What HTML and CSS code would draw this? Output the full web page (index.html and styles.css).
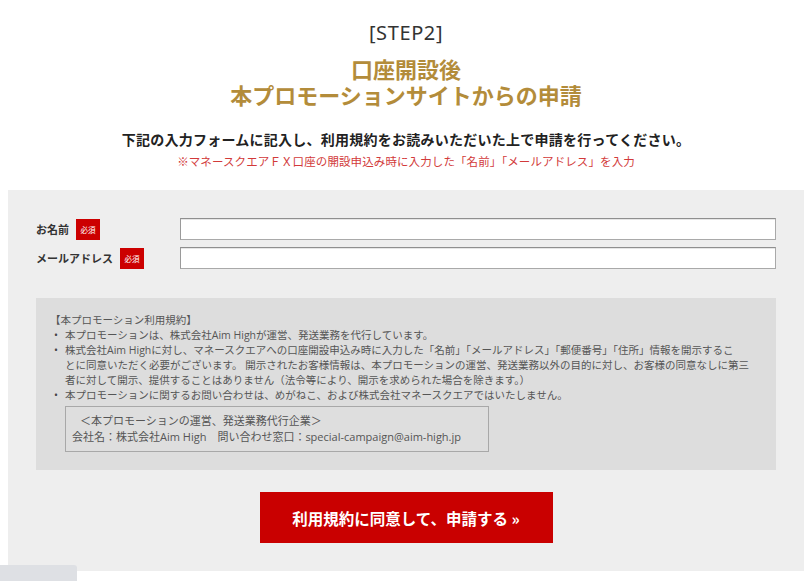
FILE: index.html
```html
<!DOCTYPE html>
<html lang="ja">
<head>
<meta charset="utf-8">
<title>STEP2</title>
<link rel="stylesheet" href="styles.css">
</head>
<body>
<header class="intro">
  <p class="step">[STEP2]</p>
  <h1 class="title">口座開設後<br>本プロモーションサイトからの申請</h1>
  <p class="lead">下記の入力フォームに記入し、利用規約をお読みいただいた上で申請を行ってください。</p>
  <p class="note">※マネースクエアＦＸ口座の開設申込み時に入力した「名前」「メールアドレス」を入力</p>
</header>

<section class="panel">
  <form class="form">
    <div class="row">
      <label class="label" for="name">お名前<span class="req">必須</span></label>
      <input class="field" id="name" type="text">
    </div>
    <div class="row">
      <label class="label" for="mail">メールアドレス<span class="req">必須</span></label>
      <input class="field" id="mail" type="text">
    </div>
  </form>

  <div class="terms">
    <p class="terms-title">【本プロモーション利用規約】</p>
    <ul class="terms-list">
      <li>本プロモーションは、株式会社Aim Highが運営、発送業務を代行しています。</li>
      <li>株式会社Aim Highに対し、マネースクエアへの口座開設申込み時に入力した「名前」「メールアドレス」「郵便番号」「住所」情報を開示するこ<br>とに同意いただく必要がございます。 開示されたお客様情報は、本プロモーションの運営、発送業務以外の目的に対し、お客様の同意なしに第三<br>者に対して開示、提供することはありません（法令等により、開示を求められた場合を除きます。）</li>
      <li>本プロモーションに関するお問い合わせは、めがねこ、および株式会社マネースクエアではいたしません。</li>
    </ul>
    <div class="company">
      <p class="company-head">＜本プロモーションの運営、発送業務代行企業＞</p>
      <p class="company-info">会社名：株式会社Aim High　問い合わせ窓口：special-campaign@aim-high.jp</p>
    </div>
  </div>

  <div class="actions">
    <button class="submit" type="button">利用規約に同意して、申請する »</button>
  </div>
</section>

<div class="status-tab"></div>
</body>
</html>
```

FILE: styles.css
```css
html, body {
  margin: 0;
  padding: 0;
}
body {
  margin: 8px;
  background: #ffffff;
  font-family: "Open Sans", "Noto Sans CJK JP", sans-serif;
  color: #333333;
}
p, h1, ul {
  margin: 0;
  padding: 0;
}

.intro {
  display: flex;
  flex-direction: column;
  align-items: center;
  padding-top: 13px;
}
.step {
  font-family: "Noto Sans", "Noto Sans CJK JP", sans-serif;
  font-size: 20px;
  line-height: 24px;
  letter-spacing: 0.6px;
  color: #333333;
}
.title {
  margin-top: 10px;
  font-family: "Noto Sans CJK JP", sans-serif;
  font-size: 22px;
  line-height: 26px;
  font-weight: 700;
  color: #b38c3a;
  text-align: center;
}
.lead {
  margin-top: 22px;
  font-family: "Noto Sans CJK JP", sans-serif;
  font-size: 14px;
  line-height: 20px;
  letter-spacing: 0.25px;
  font-weight: 700;
  color: #222222;
}
.note {
  margin-top: 4px;
  font-family: "Noto Sans CJK JP", sans-serif;
  font-size: 11.5px;
  line-height: 16px;
  letter-spacing: 0.1px;
  color: #d23a3a;
}

.panel {
  margin-top: 21px;
  background: #eeeeee;
  padding: 28px;
  display: flex;
  flex-direction: column;
}

.form {
  display: flex;
  flex-direction: column;
  gap: 7px;
}
.row {
  display: flex;
  align-items: center;
}
.label {
  width: 144px;
  flex: none;
  display: flex;
  align-items: center;
  font-family: "Noto Sans CJK JP", sans-serif;
  font-size: 11px;
  font-weight: 700;
  color: #333333;
}
.req {
  margin-left: 7px;
  width: 24px;
  height: 21px;
  display: flex;
  align-items: center;
  justify-content: center;
  background: #cc0000;
  color: #ffffff;
  font-size: 7.5px;
  font-weight: 400;
}
.field {
  flex: 1;
  height: 22px;
  box-sizing: border-box;
  margin: 0;
  padding: 0 4px;
  background: #ffffff;
  border: 1px solid #a9a9a9;
  border-top-color: #8f8f8f;
  border-left-color: #9a9a9a;
  box-shadow: inset 0 1px 0 #e6e6e6;
}

.terms {
  margin-top: 29px;
  background: #dddddd;
  padding: 14px 16px 18px 14px;
  font-family: "Open Sans", "Noto Sans CJK JP", sans-serif;
  font-size: 10.5px;
  line-height: 15px;
  color: #555555;
}
.terms-title {
  line-height: 16px;
}
.terms-list {
  list-style: none;
}
.terms-list li {
  display: flex;
}
.terms-list li::before {
  content: "•";
  flex: none;
  width: 15px;
  padding-left: 4px;
  box-sizing: border-box;
  color: #444444;
}
.company {
  margin: 3px 0 0 15px;
  width: 424px;
  box-sizing: border-box;
  border: 1px solid #a8a8a8;
  background: #dedede;
  padding: 6px;
  font-size: 11px;
  line-height: 16px;
  color: #555555;
}
.company-head {
  padding-left: 8px;
}

.actions {
  margin-top: 22px;
  display: flex;
  justify-content: center;
}
.submit {
  width: 293px;
  height: 51px;
  border: none;
  margin: 0;
  background: #c90000;
  color: #ffffff;
  font-family: "Noto Sans CJK JP", sans-serif;
  font-size: 15.5px;
  font-weight: 700;
  cursor: pointer;
}

.status-tab {
  position: fixed;
  left: 0;
  bottom: 0;
  width: 77px;
  height: 16px;
  background: #dee0e4;
  border-top-right-radius: 3px;
}
```
